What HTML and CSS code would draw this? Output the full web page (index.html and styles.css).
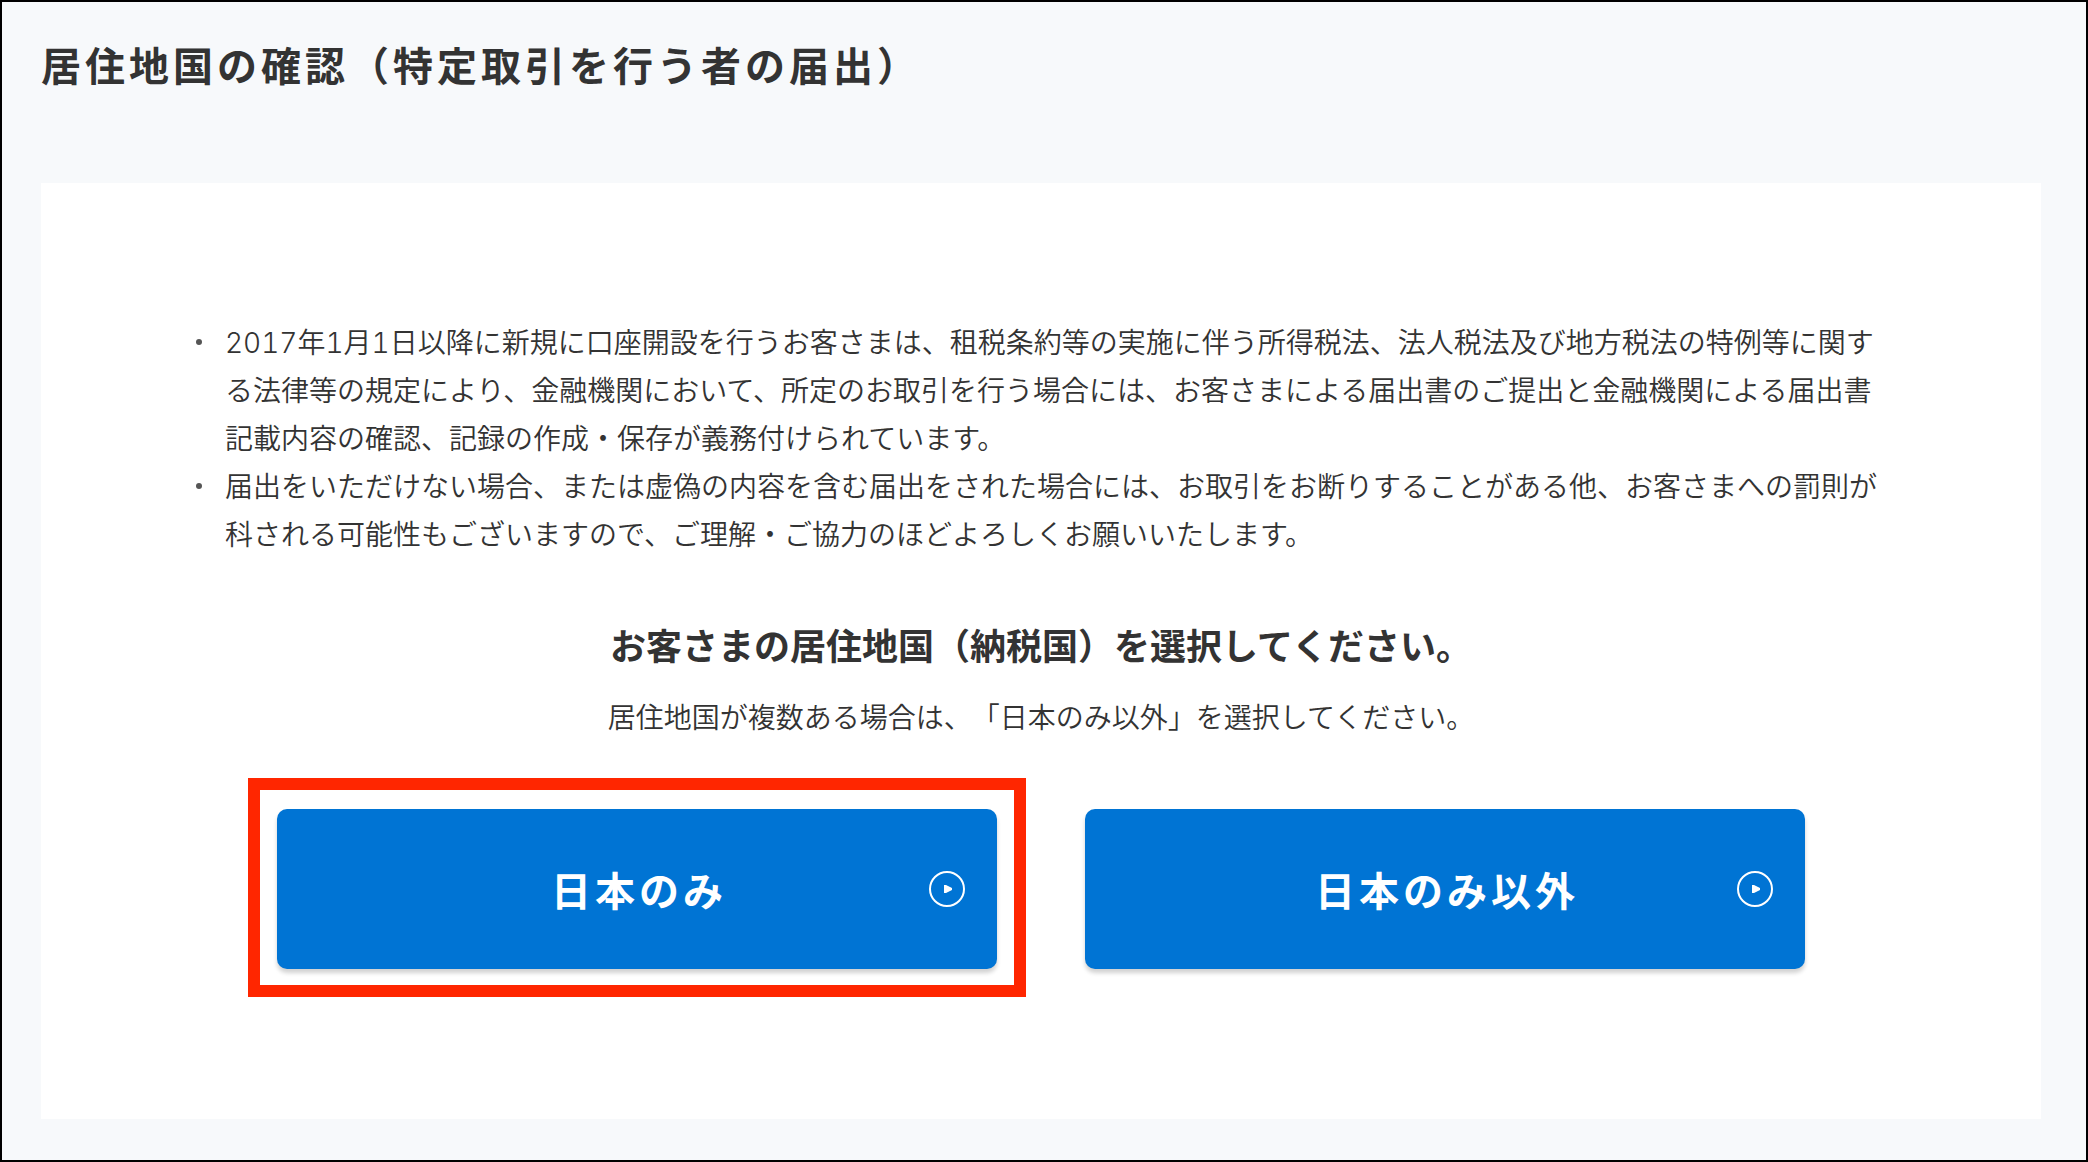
FILE: index.html
```html
<!DOCTYPE html>
<html lang="ja">
  <head>
    <meta charset="UTF-8" />
    <meta name="viewport" content="width=device-width, initial-scale=1.0" />
    <title>居住地国の確認</title>
    <link rel="stylesheet" href="styles.css">
  </head>
  <body>
    <main class="page">
      <h1 class="page-title">居住地国の確認（特定取引を行う者の届出）</h1>

      <section class="card">
        <ul class="notes">
          <li>2017年1月1日以降に新規に口座開設を行うお客さまは、租税条約等の実施に伴う所得税法、法人税法及び地方税法の特例等に関する法律等の規定により、金融機関において、所定のお取引を行う場合には、お客さまによる届出書のご提出と金融機関による届出書記載内容の確認、記録の作成・保存が義務付けられています。</li>
          <li>届出をいただけない場合、または虚偽の内容を含む届出をされた場合には、お取引をお断りすることがある他、お客さまへの罰則が科される可能性もございますので、ご理解・ご協力のほどよろしくお願いいたします。</li>
        </ul>

        <h2 class="question">お客さまの居住地国（納税国）を選択してください。</h2>
        <p class="hint">居住地国が複数ある場合は、「日本のみ以外」を選択してください。</p>

        <div class="choices">
          <button type="button" class="choice marked">
            日本のみ
            <svg class="arrow" viewBox="0 0 36 36" aria-hidden="true">
              <circle cx="18" cy="18" r="17" />
              <path d="M15 14h2l6 3v2l-6 3h-2z" />
            </svg>
          </button>
          <button type="button" class="choice">
            日本のみ以外
            <svg class="arrow" viewBox="0 0 36 36" aria-hidden="true">
              <circle cx="18" cy="18" r="17" />
              <path d="M15 14h2l6 3v2l-6 3h-2z" />
            </svg>
          </button>
        </div>
      </section>
    </main>
  </body>
</html>
```

FILE: styles.css
```css
* {
  margin: 0;
  padding: 0;
  box-sizing: border-box;
}

:root {
  --primary: #0074d4;
  --mark: #ff2600;
  --text: #333;
  --bg: #f7f9fb;
}

body {
  background: var(--bg);
  color: var(--text);
  font-family: Inter, "Noto Sans CJK JP", sans-serif;
  font-size: 28px;
  font-weight: 350;
  line-height: 48px;
  font-variant-numeric: tabular-nums;
  text-spacing-trim: space-all;
}

.page {
  min-height: 100vh;
  padding: 35px 45px 41px 39px;
  border: 2px solid #000;
}

.page-title {
  margin-bottom: 86px;
  font-size: 40px;
  font-weight: 600;
  line-height: 60px;
  letter-spacing: 4px;
}

/* Card */
.card {
  padding: 136px 154px 150px;
  background: #fff;
}

.notes {
  list-style: none;
}

.notes li {
  display: grid;
  grid-template-columns: 30px 1fr;
}

.notes li::before {
  content: "";
  width: 6px;
  height: 6px;
  margin: 20px 0 0 1px;
  border-radius: 50%;
  background: #555;
}

.question {
  margin-top: 60px;
  font-size: 36px;
  font-weight: 600;
  line-height: 56px;
  text-align: center;
}

.hint {
  margin-top: 19px;
  text-align: center;
}

/* Buttons */
.choices {
  display: flex;
  justify-content: center;
  gap: 88px;
  margin-top: 67px;
}

.choice {
  position: relative;
  flex: 0 1 720px;
  height: 160px;
  padding-left: 4px;
  border: none;
  border-radius: 10px;
  background: var(--primary);
  box-shadow: 0 4px 4px rgba(0, 0, 0, 0.18);
  color: #fff;
  font-family: inherit;
  font-size: 40px;
  font-weight: 600;
  letter-spacing: 4px;
  cursor: pointer;
}

.marked::after {
  content: "";
  position: absolute;
  inset: -31px -29px -28px;
  border: 12px solid var(--mark);
  pointer-events: none;
}

.arrow {
  position: absolute;
  top: 50%;
  right: 32px;
  width: 36px;
  height: 36px;
  margin-top: -18px;
}

.arrow circle {
  fill: none;
  stroke: #fff;
  stroke-width: 2;
}

.arrow path {
  fill: #fff;
}

@media (max-width: 900px) {
  .card {
    padding: 60px 40px;
  }

  .choices {
    flex-direction: column;
  }

  .choice {
    flex-basis: auto;
  }
}
```
